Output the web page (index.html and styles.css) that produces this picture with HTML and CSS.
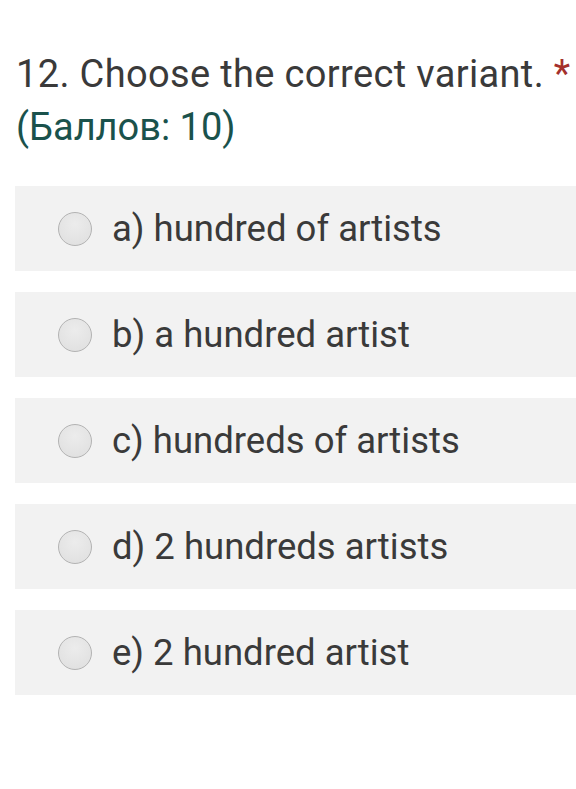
FILE: index.html
```html
<!DOCTYPE html>
<html>
<head>
<meta charset="utf-8">
<link rel="stylesheet" href="styles.css">
</head>
<body>
<div class="question">
  <div class="title">12. Choose the correct variant. <span class="req">*</span></div>
  <div class="points">(Баллов: 10)</div>
</div>
<div class="options">
  <div class="option"><span class="radio"></span><span class="label">a) hundred of artists</span></div>
  <div class="option"><span class="radio"></span><span class="label">b) a hundred artist</span></div>
  <div class="option"><span class="radio"></span><span class="label">c) hundreds of artists</span></div>
  <div class="option"><span class="radio"></span><span class="label">d) 2 hundreds artists</span></div>
  <div class="option"><span class="radio"></span><span class="label">e) 2 hundred artist</span></div>
</div>
</body>
</html>
```
FILE: styles.css
```css
html, body {
  margin: 0;
  padding: 0;
  background: #ffffff;
}
body {
  font-family: Roboto, "Noto Sans", sans-serif;
  font-weight: 400;
  color: #333333;
}
.question {
  padding: 48px 0 0 16px;
  font-size: 38px;
  line-height: 53px;
}
.title {
  color: #3a3a3a;
  letter-spacing: 0.35px;
  white-space: nowrap;
}
.req {
  color: #a4302c;
}
.points {
  color: #1a524c;
}
.options {
  display: flex;
  flex-direction: column;
  gap: 21px;
  margin-top: 32px;
  padding-left: 15px;
}
.option {
  display: flex;
  align-items: center;
  height: 85px;
  background: #f2f2f2;
  padding-left: 43px;
}
.radio {
  width: 32px;
  height: 32px;
  border-radius: 50%;
  border: 1px solid #b3b3b3;
  background: radial-gradient(circle at 50% 35%, #ececec 0%, #dedede 100%);
  flex: none;
}
.label {
  margin-left: 20px;
  font-size: 36.5px;
  color: #3a3a3a;
}
```
